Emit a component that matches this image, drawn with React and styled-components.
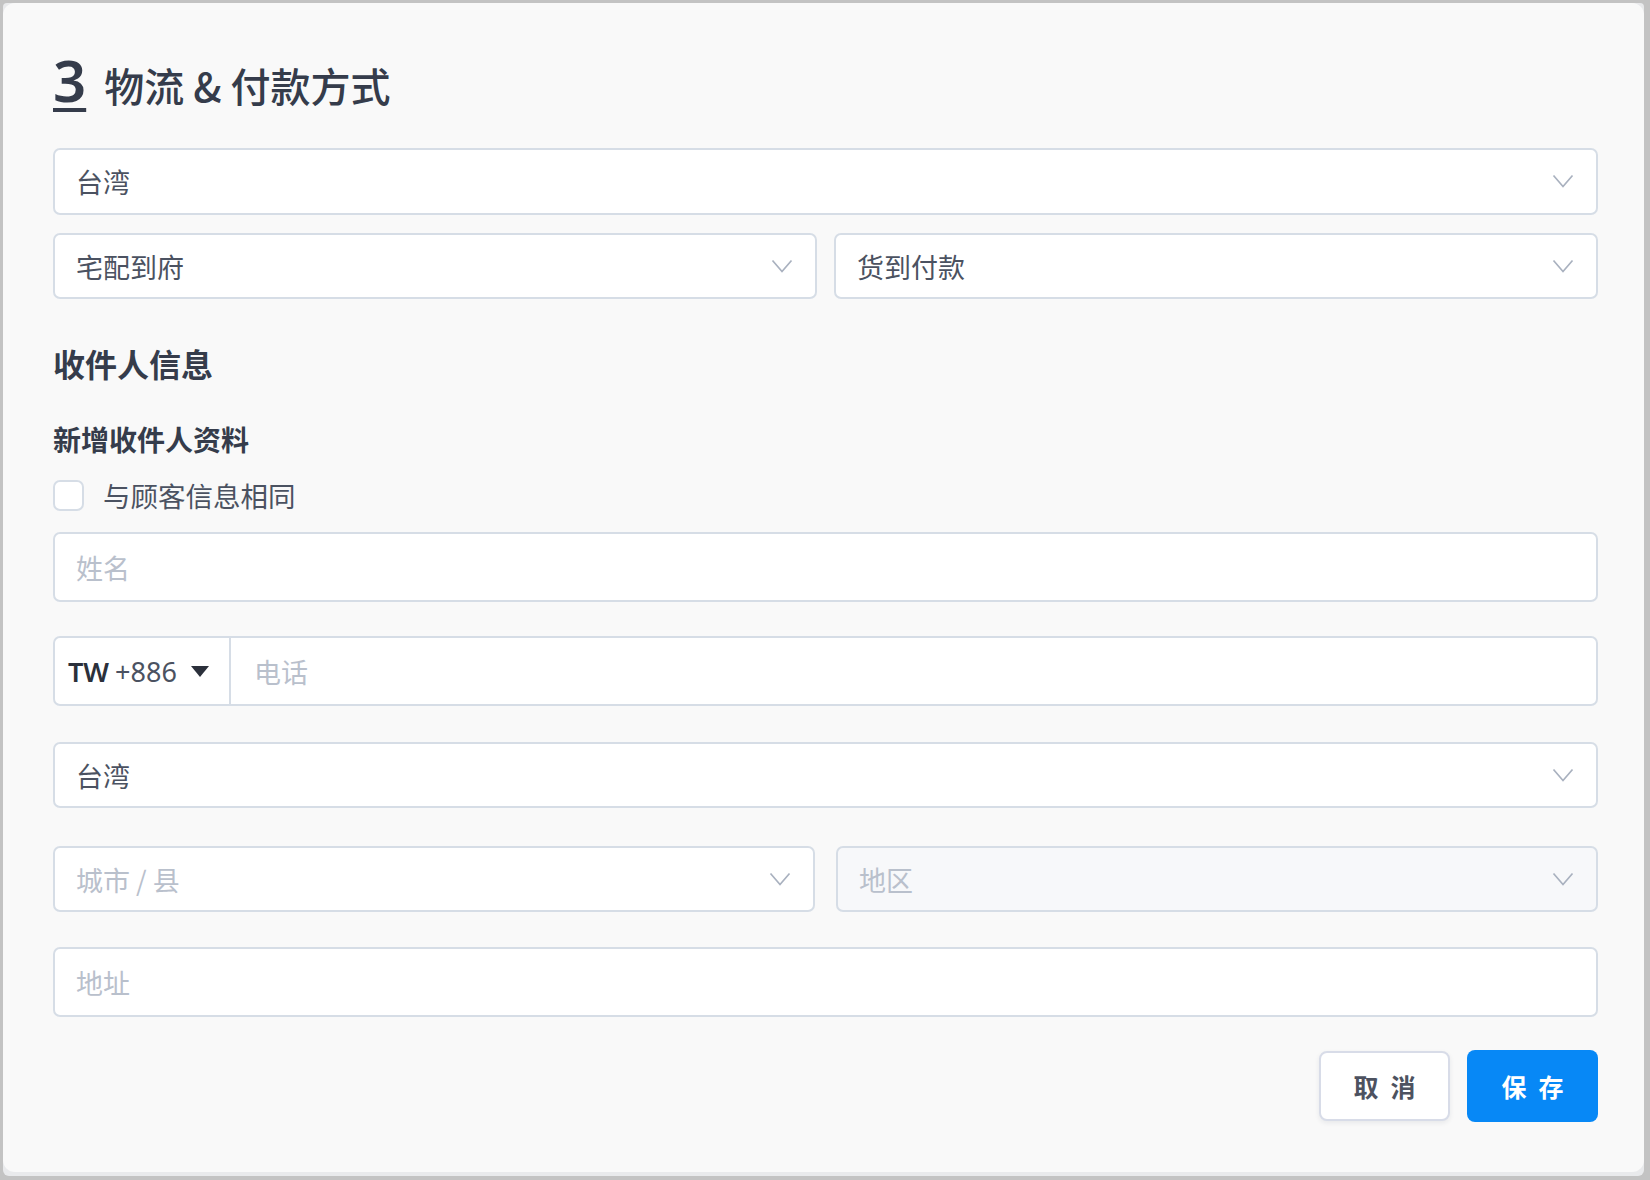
import styled, { createGlobalStyle } from "styled-components";

const GlobalStyle = createGlobalStyle`
  html, body {
    margin: 0;
    padding: 0;
    background: #c3c3c3;
  }
  body {
    font-family: "Noto Sans", "Noto Sans CJK SC", sans-serif;
  }
  * {
    box-sizing: border-box;
  }
`;

const Frame = styled.div`
  margin: 3px 6px 4px 3px;
  height: 1173px;
  background: #e9eaec;
  border-radius: 4px 4px 6px 6px;
`;

const Card = styled.div`
  display: flow-root;
  height: 1169px;
  background: #f9f9f9;
  border-radius: 12px;
  padding: 0 46px 0 50px;
`;

const Heading = styled.h2`
  margin: 45px 0 0;
  display: flex;
  align-items: baseline;
  gap: 18px;
  color: #353c4b;
  font-weight: 400;
  line-height: 64px;
`;

const StepNo = styled.span`
  font-family: "Noto Sans", sans-serif;
  font-size: 58px;
  font-weight: 600;
  text-decoration: underline;
  text-decoration-thickness: 4px;
  text-underline-offset: 6px;
`;

const StepTitle = styled.span`
  font-family: "Noto Sans CJK SC", sans-serif;
  font-size: 40px;
  font-weight: 500;
`;

const Row = styled.div`
  display: flex;
  gap: ${(p) => p.$gap || 17}px;
  margin-top: ${(p) => p.$mt || 0}px;
`;

const Box = styled.div`
  flex: 1;
  height: ${(p) => p.$h || 66}px;
  margin-top: ${(p) => p.$mt || 0}px;
  display: flex;
  align-items: center;
  padding: 0 22px 0 21px;
  background: ${(p) => (p.$disabled ? "#f7f8fa" : "#ffffff")};
  border: 2px solid #d6dde6;
  border-radius: 7px;
  font-family: "Noto Sans CJK SC", sans-serif;
  font-size: 27px;
  color: ${(p) => (p.$placeholder ? "#b9c0cc" : "#4b5261")};
`;

const BoxText = styled.span`
  flex: 1;
`;

const Chevron = () => (
  <svg width="22" height="15" viewBox="0 0 22 15">
    <polyline
      points="1.5,1.5 11,12.5 20.5,1.5"
      fill="none"
      stroke="#a9b1bf"
      strokeWidth="1.7"
    />
  </svg>
);

const SectionTitle = styled.h3`
  margin: 44px 0 0;
  font-family: "Noto Sans CJK SC", sans-serif;
  font-size: 32px;
  line-height: 40px;
  font-weight: 700;
  color: #353c4b;
`;

const SubTitle = styled.h4`
  margin: 38px 0 0;
  font-family: "Noto Sans CJK SC", sans-serif;
  font-size: 28px;
  line-height: 36px;
  font-weight: 700;
  color: #353c4b;
`;

const CheckRow = styled.label`
  margin-top: 22px;
  display: flex;
  align-items: center;
  gap: 19px;
  height: 32px;
  font-family: "Noto Sans CJK SC", sans-serif;
  font-size: 27.5px;
  color: #4b5261;
`;

const CheckBox = styled.span`
  width: 31px;
  height: 31px;
  border: 2px solid #d6dde6;
  border-radius: 7px;
  background: #ffffff;
`;

const PhoneBox = styled.div`
  height: 70px;
  margin-top: 34px;
  display: flex;
  background: #ffffff;
  border: 2px solid #d6dde6;
  border-radius: 7px;
`;

const CountryCode = styled.div`
  width: 176px;
  display: flex;
  align-items: center;
  padding-left: 13px;
  border-right: 2px solid #d6dde6;
  font-family: "Noto Sans", sans-serif;
  font-size: 27px;
  color: #4b5261;
`;

const Code = styled.b`
  color: #2b303b;
  font-weight: 600;
  margin-right: 6px;
`;

const Caret = styled.span`
  margin-left: 14px;
  width: 0;
  height: 0;
  border-left: 9px solid transparent;
  border-right: 9px solid transparent;
  border-top: 11px solid #2b303b;
`;

const PhoneInput = styled.div`
  flex: 1;
  display: flex;
  align-items: center;
  padding-left: 23px;
  font-family: "Noto Sans CJK SC", sans-serif;
  font-size: 27px;
  color: #b9c0cc;
`;

const Actions = styled.div`
  margin-top: 33px;
  display: flex;
  justify-content: flex-end;
  align-items: center;
  gap: 17px;
`;

const Button = styled.button`
  width: 131px;
  height: ${(p) => (p.$primary ? 72 : 70)}px;
  border-radius: 8px;
  border: ${(p) => (p.$primary ? "none" : "2px solid #d8dce8")};
  background: ${(p) => (p.$primary ? "#0788f6" : "#ffffff")};
  color: ${(p) => (p.$primary ? "#ffffff" : "#4d5260")};
  box-shadow: ${(p) =>
    p.$primary ? "none" : "0 2px 5px rgba(30, 40, 60, 0.08)"};
  font-family: "Noto Sans CJK SC", sans-serif;
  font-size: 25px;
  font-weight: 700;
  letter-spacing: 12px;
  padding: 0 0 0 12px;
`;

const Select = ({ children, placeholder, disabled, mt, h }) => (
  <Box $placeholder={placeholder} $disabled={disabled} $mt={mt} $h={h}>
    <BoxText>{children}</BoxText>
    <Chevron />
  </Box>
);

export default function App() {
  return (
    <>
      <GlobalStyle />
      <Frame>
        <Card>
          <Heading>
            <StepNo>3</StepNo>
            <StepTitle>物流 &amp; 付款方式</StepTitle>
          </Heading>

          <Select mt={31} h={67}>台湾</Select>
          <Row $mt={18}>
            <Select>宅配到府</Select>
            <Select>货到付款</Select>
          </Row>

          <SectionTitle>收件人信息</SectionTitle>
          <SubTitle>新增收件人资料</SubTitle>
          <CheckRow>
            <CheckBox />
            与顾客信息相同
          </CheckRow>

          <Box $placeholder $mt={21} $h={70}>
            姓名
          </Box>

          <PhoneBox>
            <CountryCode>
              <Code>TW</Code>+886
              <Caret />
            </CountryCode>
            <PhoneInput>电话</PhoneInput>
          </PhoneBox>

          <Select mt={36}>台湾</Select>
          <Row $mt={38} $gap={21}>
            <Select placeholder>城市 / 县</Select>
            <Select placeholder disabled>
              地区
            </Select>
          </Row>

          <Box $placeholder $mt={35} $h={70}>
            地址
          </Box>

          <Actions>
            <Button>取消</Button>
            <Button $primary>保存</Button>
          </Actions>
        </Card>
      </Frame>
    </>
  );
}
